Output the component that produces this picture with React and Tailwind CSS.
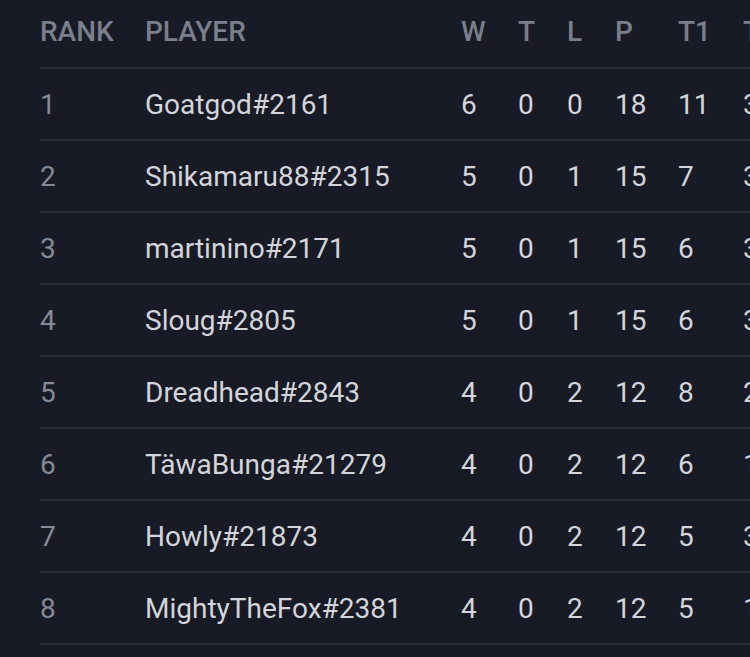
import React from "react";

const rows = [
  ["1", "Goatgod#2161", "6", "0", "0", "18", "11", "3"],
  ["2", "Shikamaru88#2315", "5", "0", "1", "15", "7", "3"],
  ["3", "martinino#2171", "5", "0", "1", "15", "6", "3"],
  ["4", "Sloug#2805", "5", "0", "1", "15", "6", "3"],
  ["5", "Dreadhead#2843", "4", "0", "2", "12", "8", "2"],
  ["6", "TäwaBunga#21279", "4", "0", "2", "12", "6", "1"],
  ["7", "Howly#21873", "4", "0", "2", "12", "5", "3"],
  ["8", "MightyTheFox#2381", "4", "0", "2", "12", "5", "1"],
];

const cols = "grid grid-cols-[105px_316px_57px_49px_48px_63px_65px_60px]";

export default function App() {
  return (
    <div
      className="w-[750px] h-[657px] overflow-hidden bg-[#181b25] pl-[40px]"
      style={{ fontFamily: "Roboto, 'Liberation Sans', sans-serif" }}
    >
      <div className="w-[760px]">
        <div className={`${cols} h-[69px] items-center border-b-2 border-[#2a2e38] text-[28px] font-medium text-[#7b7f8b] pb-[4px]`}>
          <div>RANK</div>
          <div>PLAYER</div>
          <div>W</div>
          <div>T</div>
          <div>L</div>
          <div>P</div>
          <div>T1</div>
          <div>T2</div>
        </div>
        {rows.map((r) => (
          <div
            key={r[0]}
            className={`${cols} h-[72px] items-center border-b-2 border-[#2a2e38] text-[28px] text-[#d3d5db] pt-[1px]`}
          >
            <div className="text-[#868a95]">{r[0]}</div>
            <div className="whitespace-nowrap">{r[1]}</div>
            <div>{r[2]}</div>
            <div>{r[3]}</div>
            <div>{r[4]}</div>
            <div>{r[5]}</div>
            <div>{r[6]}</div>
            <div>{r[7]}</div>
          </div>
        ))}
      </div>
    </div>
  );
}
